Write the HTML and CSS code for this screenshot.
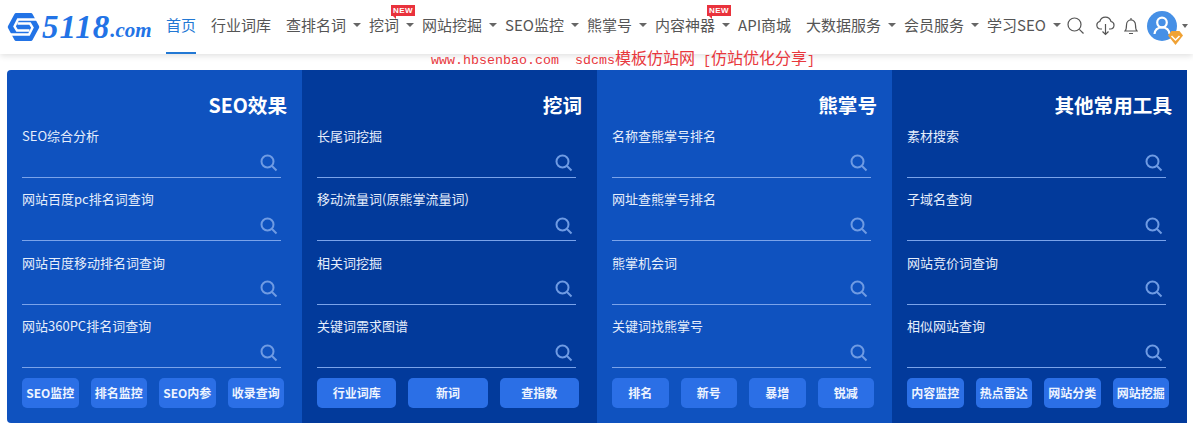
FILE: index.html
```html
<!DOCTYPE html>
<html lang="zh-CN">
<head>
  <meta charset="UTF-8">
  <title>5118</title>
  <link rel="stylesheet" href="styles.css">
</head>
<body>

<header class="topbar">
  <a class="logo" href="#">
    <svg class="logo-mark" width="33" height="30" viewBox="0 0 33 30">
      <path d="M9 1H24Q25 1 25.500 2L32 14Q32.500 15 32 16L25.500 28Q25 29 24 29H9Q8 29 7.500 28L1 16Q.5 15 1 14L7.500 2Q8 1 9 1Z" fill="#2273e6"/>
      <path d="M30 7.500H11L7.500 14.500L10 18.500H22.500" fill="none" stroke="#fff" stroke-width="2.400"/>
      <path d="M3 22.500H22L25.500 15.500L23 11.500H10.500" fill="none" stroke="#fff" stroke-width="2.400"/>
    </svg>
    <span class="logo-num">5118</span><span class="logo-dom">.com</span>
  </a>
  <nav class="nav">
    <a class="nav-item active" href="#">首页</a>
    <a class="nav-item" href="#">行业词库</a>
    <a class="nav-item" href="#">查排名词<i class="caret"></i></a>
    <a class="nav-item" href="#">挖词<i class="caret"></i><span class="badge-new">NEW</span></a>
    <a class="nav-item" href="#">网站挖掘<i class="caret"></i></a>
    <a class="nav-item" href="#">SEO监控<i class="caret"></i></a>
    <a class="nav-item" href="#">熊掌号<i class="caret"></i></a>
    <a class="nav-item" href="#">内容神器<i class="caret"></i><span class="badge-new">NEW</span></a>
    <a class="nav-item" href="#">API商城</a>
    <a class="nav-item" href="#">大数据服务<i class="caret"></i></a>
    <a class="nav-item" href="#">会员服务<i class="caret"></i></a>
    <a class="nav-item" href="#">学习SEO<i class="caret"></i></a>
  </nav>
  <div class="tools">
    <svg class="tool-search" width="18" height="18" viewBox="0 0 18 18" fill="none" stroke="#555" stroke-width="1.200">
      <circle cx="7.500" cy="7.500" r="6.500"/>
      <path d="M12.300 12.300L16.500 16.500"/>
    </svg>
    <svg class="tool-cloud" width="19" height="20" viewBox="0 0 19 20" fill="none" stroke="#555" stroke-width="1.200">
      <path d="M6 13H4.500A3.800 3.800 0 0 1 3.800 5.500A5.800 5.800 0 0 1 15 5.500A3.800 3.800 0 0 1 14.500 13H13"/>
      <path d="M9.500 8V18.500M6.500 15.500L9.500 18.500L12.500 15.500"/>
    </svg>
    <svg class="tool-bell" width="14" height="18" viewBox="0 0 14 18" fill="none" stroke="#555" stroke-width="1.200">
      <path d="M1 14H13C11.500 12.500 11.500 11 11.500 8C11.500 5 9.500 2.800 7 2.800C4.500 2.800 2.500 5 2.500 8C2.500 11 2.500 12.500 1 14Z"/>
      <path d="M7 1V2.800M5 16.500H9"/>
    </svg>
    <div class="avatar">
      <svg width="30" height="30" viewBox="0 0 30 30" fill="none" stroke="#fff" stroke-width="2.200">
        <circle cx="15" cy="11.500" r="4.800"/>
        <path d="M7.500 23C8 18.500 11 16.500 15 16.500C19 16.500 22 18.500 22.500 23"/>
      </svg>
      <svg class="avatar-vip" width="15" height="14" viewBox="0 0 15 14">
        <path d="M3.500 0H11.500L15 4.500L7.500 14L0 4.500Z" fill="#f0a235"/>
        <path d="M3.500 5L7.500 9L11.500 5" fill="none" stroke="#fff" stroke-width="1.500"/>
      </svg>
    </div>
    <i class="caret"></i>
  </div>
</header>

<p class="notice"><span class="notice-latin">www.hbsenbao.com&nbsp;&nbsp;sdcms</span>模板仿站网<span class="notice-latin">&nbsp;[</span>仿站优化分享<span class="notice-latin">]</span></p>

<main class="panel">

  <section class="col">
    <h2>SEO效果</h2>
    <div class="rows">
      <div class="row"><label>SEO综合分析</label><div class="field"><input type="text"><svg class="icon-search" width="18" height="18" viewBox="0 0 18 18"><circle cx="7.500" cy="7.500" r="6"/><path d="M12 12L16.500 16.500"/></svg></div></div>
      <div class="row"><label>网站百度pc排名词查询</label><div class="field"><input type="text"><svg class="icon-search" width="18" height="18" viewBox="0 0 18 18"><circle cx="7.500" cy="7.500" r="6"/><path d="M12 12L16.500 16.500"/></svg></div></div>
      <div class="row"><label>网站百度移动排名词查询</label><div class="field"><input type="text"><svg class="icon-search" width="18" height="18" viewBox="0 0 18 18"><circle cx="7.500" cy="7.500" r="6"/><path d="M12 12L16.500 16.500"/></svg></div></div>
      <div class="row"><label>网站360PC排名词查询</label><div class="field"><input type="text"><svg class="icon-search" width="18" height="18" viewBox="0 0 18 18"><circle cx="7.500" cy="7.500" r="6"/><path d="M12 12L16.500 16.500"/></svg></div></div>
    </div>
    <div class="btns">
      <a href="#">SEO监控</a><a href="#">排名监控</a><a href="#">SEO内参</a><a href="#">收录查询</a>
    </div>
  </section>

  <section class="col dark">
    <h2>挖词</h2>
    <div class="rows">
      <div class="row"><label>长尾词挖掘</label><div class="field"><input type="text"><svg class="icon-search" width="18" height="18" viewBox="0 0 18 18"><circle cx="7.500" cy="7.500" r="6"/><path d="M12 12L16.500 16.500"/></svg></div></div>
      <div class="row"><label>移动流量词(原熊掌流量词)</label><div class="field"><input type="text"><svg class="icon-search" width="18" height="18" viewBox="0 0 18 18"><circle cx="7.500" cy="7.500" r="6"/><path d="M12 12L16.500 16.500"/></svg></div></div>
      <div class="row"><label>相关词挖掘</label><div class="field"><input type="text"><svg class="icon-search" width="18" height="18" viewBox="0 0 18 18"><circle cx="7.500" cy="7.500" r="6"/><path d="M12 12L16.500 16.500"/></svg></div></div>
      <div class="row"><label>关键词需求图谱</label><div class="field"><input type="text"><svg class="icon-search" width="18" height="18" viewBox="0 0 18 18"><circle cx="7.500" cy="7.500" r="6"/><path d="M12 12L16.500 16.500"/></svg></div></div>
    </div>
    <div class="btns">
      <a href="#">行业词库</a><a href="#">新词</a><a href="#">查指数</a>
    </div>
  </section>

  <section class="col">
    <h2>熊掌号</h2>
    <div class="rows">
      <div class="row"><label>名称查熊掌号排名</label><div class="field"><input type="text"><svg class="icon-search" width="18" height="18" viewBox="0 0 18 18"><circle cx="7.500" cy="7.500" r="6"/><path d="M12 12L16.500 16.500"/></svg></div></div>
      <div class="row"><label>网址查熊掌号排名</label><div class="field"><input type="text"><svg class="icon-search" width="18" height="18" viewBox="0 0 18 18"><circle cx="7.500" cy="7.500" r="6"/><path d="M12 12L16.500 16.500"/></svg></div></div>
      <div class="row"><label>熊掌机会词</label><div class="field"><input type="text"><svg class="icon-search" width="18" height="18" viewBox="0 0 18 18"><circle cx="7.500" cy="7.500" r="6"/><path d="M12 12L16.500 16.500"/></svg></div></div>
      <div class="row"><label>关键词找熊掌号</label><div class="field"><input type="text"><svg class="icon-search" width="18" height="18" viewBox="0 0 18 18"><circle cx="7.500" cy="7.500" r="6"/><path d="M12 12L16.500 16.500"/></svg></div></div>
    </div>
    <div class="btns">
      <a href="#">排名</a><a href="#">新号</a><a href="#">暴增</a><a href="#">锐减</a>
    </div>
  </section>

  <section class="col dark">
    <h2>其他常用工具</h2>
    <div class="rows">
      <div class="row"><label>素材搜索</label><div class="field"><input type="text"><svg class="icon-search" width="18" height="18" viewBox="0 0 18 18"><circle cx="7.500" cy="7.500" r="6"/><path d="M12 12L16.500 16.500"/></svg></div></div>
      <div class="row"><label>子域名查询</label><div class="field"><input type="text"><svg class="icon-search" width="18" height="18" viewBox="0 0 18 18"><circle cx="7.500" cy="7.500" r="6"/><path d="M12 12L16.500 16.500"/></svg></div></div>
      <div class="row"><label>网站竞价词查询</label><div class="field"><input type="text"><svg class="icon-search" width="18" height="18" viewBox="0 0 18 18"><circle cx="7.500" cy="7.500" r="6"/><path d="M12 12L16.500 16.500"/></svg></div></div>
      <div class="row"><label>相似网站查询</label><div class="field"><input type="text"><svg class="icon-search" width="18" height="18" viewBox="0 0 18 18"><circle cx="7.500" cy="7.500" r="6"/><path d="M12 12L16.500 16.500"/></svg></div></div>
    </div>
    <div class="btns">
      <a href="#">内容监控</a><a href="#">热点雷达</a><a href="#">网站分类</a><a href="#">网站挖掘</a>
    </div>
  </section>

</main>

</body>
</html>
```

FILE: styles.css
```css
body {
  margin: 0;
  font-family: "Noto Sans CJK SC", "Noto Sans", sans-serif;
  background-color: #fff;
}

a {
  text-decoration: none;
}

.topbar {
  display: flex;
  height: 54px;
  padding-left: 7px;
  background-color: #fff;
  box-shadow: 0 2px 6px rgba(0,0,0,0.12);
  position: relative;
}

.logo {
  display: flex;
  align-items: center;
  width: 143px;
  margin-right: 16px;
  color: #2273e6;
  font-family: "Liberation Serif", serif;
  font-style: italic;
  font-weight: bold;
  white-space: nowrap;
}

.logo-mark {
  flex: none;
  margin-right: 2px;
}

.logo-num {
  font-size: 33px;
  letter-spacing: 1px;
}

.logo-dom {
  font-size: 21px;
  margin-top: 6px;
}

.nav {
  display: flex;
}

.nav-item {
  display: flex;
  align-items: center;
  position: relative;
  margin-right: 15px;
  color: #555;
  font-size: 15px;
  white-space: nowrap;
  border-bottom: 2px solid transparent;
  height: 49px;
  padding-bottom: 3px;
}

.nav-item.active {
  color: #2278d4;
  border-bottom-color: #2278d4;
}

.caret {
  width: 0;
  height: 0;
  margin-left: 7px;
  margin-right: -7px;
  border-left: 4px solid transparent;
  border-right: 4px solid transparent;
  border-top: 4px solid #666;
}

.badge-new {
  position: absolute;
  top: 5px;
  right: -8px;
  width: 24px;
  height: 11px;
  background-color: #e9323c;
  color: #fff;
  font-family: "Liberation Sans", sans-serif;
  font-size: 8px;
  font-weight: bold;
  line-height: 11px;
  text-align: center;
  letter-spacing: 0.5px;
}

.badge-new::after {
  content: "";
  position: absolute;
  left: 2px;
  top: 11px;
  border-top: 3px solid #e9323c;
  border-left: 3px solid transparent;
}

.tools {
  display: flex;
  align-items: center;
  margin-left: -2px;
  padding-bottom: 2px;
}

.tool-search {
  margin-right: 11px;
}

.tool-cloud {
  margin-right: 9px;
}

.tool-bell {
  margin-right: 9px;
}

.avatar {
  position: relative;
  width: 30px;
  height: 30px;
  border-radius: 50%;
  background-color: #4690e6;
}

.avatar-vip {
  position: absolute;
  left: 21px;
  top: 20px;
}

.tools .caret {
  margin-left: 5px;
  margin-right: 0;
  border-left-width: 3px;
  border-right-width: 3px;
}

.notice {
  position: relative;
  margin: 0;
  height: 16px;
  padding-left: 431px;
  color: #e8383d;
  font-size: 16px;
  line-height: 7px;
  white-space: nowrap;
}

.notice-latin {
  font-family: "Liberation Mono", monospace;
  font-size: 13.33px;
}

.panel {
  display: grid;
  grid-template-columns: repeat(4, 295px);
  margin-left: 7px;
  border-radius: 4px;
  overflow: hidden;
}

.col {
  padding: 20px 15px 15px;
  background-color: #0f52bf;
  color: #fff;
}

.col.dark {
  background-color: #023a9b;
}

.col h2 {
  margin: 0 0 5px;
  height: 32px;
  font-size: 19.6px;
  line-height: 30px;
  text-align: right;
}

.rows {
  display: flex;
  flex-direction: column;
  gap: 12.4px;
}

.row {
  width: 259px;
}

.row label {
  display: block;
  height: 20px;
  color: #e6eefb;
  font-size: 13px;
  line-height: 18px;
  white-space: nowrap;
}

.field {
  display: flex;
  align-items: center;
  height: 29px;
  padding-top: 1px;
  padding-right: 3px;
  border-bottom: 1px solid #7aa3ea;
}

.field input {
  flex: 1;
  min-width: 0;
  border: none;
  outline: none;
  background: none;
  color: #fff;
}

.icon-search {
  fill: none;
  stroke: #6f9be3;
  stroke-width: 2;
}

.btns {
  display: flex;
  gap: 12px;
  width: 262px;
  margin-top: 10px;
}

.btns a {
  flex: 1;
  height: 30px;
  border-radius: 5px;
  background-color: #2b6fe6;
  color: #eef4ff;
  font-size: 12px;
  font-weight: bold;
  line-height: 30px;
  text-align: center;
  white-space: nowrap;
}
```
